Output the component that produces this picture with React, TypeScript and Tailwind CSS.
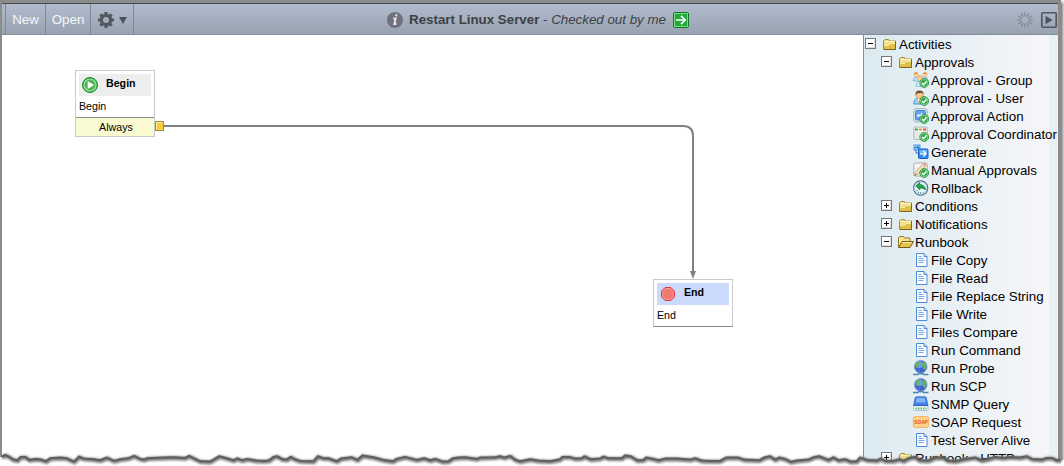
import React from 'react';

type IconKind =
  | 'folder' | 'open' | 'group' | 'user' | 'action' | 'coordinator' | 'generate'
  | 'manual' | 'rollback' | 'doc' | 'globe' | 'snmp' | 'soap';

interface Row {
  level: 0 | 1 | 2;
  label: string;
  icon: IconKind;
  toggle?: 'plus' | 'minus';
}

const rows: Row[] = [
  { level: 0, label: 'Activities', icon: 'folder', toggle: 'minus' },
  { level: 1, label: 'Approvals', icon: 'folder', toggle: 'minus' },
  { level: 2, label: 'Approval - Group', icon: 'group' },
  { level: 2, label: 'Approval - User', icon: 'user' },
  { level: 2, label: 'Approval Action', icon: 'action' },
  { level: 2, label: 'Approval Coordinator', icon: 'coordinator' },
  { level: 2, label: 'Generate', icon: 'generate' },
  { level: 2, label: 'Manual Approvals', icon: 'manual' },
  { level: 2, label: 'Rollback', icon: 'rollback' },
  { level: 1, label: 'Conditions', icon: 'folder', toggle: 'plus' },
  { level: 1, label: 'Notifications', icon: 'folder', toggle: 'plus' },
  { level: 1, label: 'Runbook', icon: 'open', toggle: 'minus' },
  { level: 2, label: 'File Copy', icon: 'doc' },
  { level: 2, label: 'File Read', icon: 'doc' },
  { level: 2, label: 'File Replace String', icon: 'doc' },
  { level: 2, label: 'File Write', icon: 'doc' },
  { level: 2, label: 'Files Compare', icon: 'doc' },
  { level: 2, label: 'Run Command', icon: 'doc' },
  { level: 2, label: 'Run Probe', icon: 'globe' },
  { level: 2, label: 'Run SCP', icon: 'globe' },
  { level: 2, label: 'SNMP Query', icon: 'snmp' },
  { level: 2, label: 'SOAP Request', icon: 'soap' },
  { level: 2, label: 'Test Server Alive', icon: 'doc' },
  { level: 1, label: 'Runbook - HTTP', icon: 'folder', toggle: 'plus' },
];

const indent = { 0: 'pl-[1px]', 1: 'pl-[17px]', 2: 'pl-[49px]' };

function Check() {
  return (
    <g>
      <circle cx="11.200" cy="11" r="4.400" fill="#2fa544" stroke="#16862f" strokeWidth=".8" />
      <circle cx="11.200" cy="11" r="3.700" fill="none" stroke="#a9e2ad" strokeWidth=".7" />
      <path d="M9 11l1.700 1.800 2.800-3.600" fill="none" stroke="#fff" strokeWidth="1.400" />
    </g>
  );
}

function Person({ x, y, hair, shirt }: { x: number; y: number; hair: string; shirt: string }) {
  return (
    <g transform={`translate(${x} ${y})`}>
      <path d="M0 9q0-4 3-4t3 4z" fill={shirt} stroke="#4b9bd6" strokeWidth=".5" />
      <circle cx="3" cy="2.800" r="2.100" fill="#fbd7a8" stroke="#d79b5c" strokeWidth=".5" />
      <path d="M.8 2.600Q1 .2 3 .2t2.200 2.400Q3 1 .8 2.600" fill={hair} />
    </g>
  );
}

function TreeIcon({ kind }: { kind: IconKind }) {
  return (
    <svg className="h-4 w-4 shrink-0 overflow-visible" viewBox="0 0 16 16">
      {kind === 'folder' && (
        <g>
          <path d="M1.500 13.500V5l1.500-1.500h3.500l1 1.500h6v8.500z" fill="#f3e08a" stroke="#a8893a" />
          <path d="M2.500 5.500h10.500" stroke="#fff5b4" />
          <path d="M2 13V9.500h4.500l2-2h5V13z" fill="#dfc04a" />
          <path d="M2.500 9.500h4l2-2h4.500" stroke="#fbf0b0" fill="none" strokeWidth=".8" />
          <path d="M13.500 5v8.500H2" stroke="#7d6220" fill="none" />
        </g>
      )}
      {kind === 'open' && (
        <g>
          <path d="M0.500 13V4l1-1.500h4l1 1.500h5.500v3.500" fill="#f6e497" stroke="#9a7826" />
          <path d="M0.500 13.500L4 7.500h11.500L12 13.500z" fill="#e4c54b" stroke="#765a18" />
          <path d="M4.500 8.500h9" stroke="#fff2a4" />
        </g>
      )}
      {kind === 'group' && (
        <g>
          <Person x={0} y={0} hair="#d78b40" shirt="#bfe0f7" />
          <Person x={9} y={0} hair="#d78b40" shirt="#bfe0f7" />
          <g transform="translate(.6 3) scale(1.250)"><Person x={2} y={0} hair="#edb56b" shirt="#d8f0ff" /></g>
          <Check />
        </g>
      )}
      {kind === 'user' && (
        <g>
          <path d="M.8 14q0-6 5-6t5 6z" fill="#9fd3f8" stroke="#4295cd" />
          <path d="M4 8.500l2 4.500 2-4.500" fill="#fff" stroke="#f5a64c" strokeWidth=".8" />
          <circle cx="6.500" cy="5" r="3.600" fill="#fbc98c" stroke="#c58745" strokeWidth=".6" />
          <path d="M2.700 5.500Q1.700 .4 6.500.4t3.900 4.600L9.500 3 4.300 3.300z" fill="#6b5136" />
          <Check />
        </g>
      )}
      {kind === 'action' && (
        <g>
          <rect x=".8" y=".8" width="13.400" height="13" rx="1.800" fill="#f4f6f7" stroke="#9aa8b5" />
          <rect x="2.500" y="2.500" width="10" height="9.500" rx="1" fill="#65a4e9" stroke="#4588d6" />
          <path d="M4 6.500h4V4.500l3 3-3 3v-2H4z" fill="#e9f6ff" />
          <Check />
        </g>
      )}
      {kind === 'coordinator' && (
        <g>
          <rect x=".8" y="1" width="13.400" height="12.500" rx="1" fill="#e4e7e6" stroke="#b4bab9" />
          <path d="M2 2h11v3.500H2z" fill="#fff" />
          <path d="M2 3.500h3" stroke="#3ba33d" strokeWidth="2" />
          <path d="M6 3.500h3" stroke="#d89a20" strokeWidth="2" />
          <path d="M10 3.500h3" stroke="#d84b30" strokeWidth="2" />
          <Check />
        </g>
      )}
      {kind === 'generate' && (
        <g>
          <rect x="1" y="1" width="6" height="5" fill="#91c9fa" stroke="#4e9ae8" />
          <path d="M2 3.500h4M4.500 2l1.500 1.500L4.500 5M3 6v3h3" fill="none" stroke="#2477d4" />
          <rect x="5.500" y="5" width="9.500" height="9.500" rx="1" fill="#318ae8" stroke="#1762c2" />
          <path d="M6.500 6h7.500v3H6.500z" fill="#6bb4f5" />
          <path d="M7 9.800h6M10.300 7l2.800 2.800-2.800 2.800" fill="none" stroke="#fff" strokeWidth="1.300" />
        </g>
      )}
      {kind === 'manual' && (
        <g>
          <rect x=".8" y="1" width="13.400" height="13" rx="1.500" fill="#f5f5f5" stroke="#aaa" />
          <path d="M1.500 13.500l1-3.500L10 2l2.500 2.300L5 12z" fill="#f9e3b8" stroke="#c2955d" strokeWidth=".8" />
          <path d="M9.500 2.500l1.500-2 2.500 2-1 2z" fill="#f3a18b" />
          <path d="M1.500 13.500l.6-1.800 1.200 1.200z" fill="#555" />
          <Check />
        </g>
      )}
      {kind === 'rollback' && (
        <g>
          <circle cx="7.700" cy="8" r="7.100" fill="#eef8fb" stroke="#416f8e" strokeWidth="1.100" />
          <circle cx="7.700" cy="8" r="5.900" fill="none" stroke="#b4d4e1" strokeWidth=".8" />
          <path d="M2.800 6l4-3.500v2q5.200.2 5.700 5.500-2-2.300-5.700-2v2z" fill="#27a545" stroke="#087536" strokeWidth=".7" />
          <path d="M3.500 11l1.300-.7M5.300 13l.5-1.200M7.700 13.500V12M10.500 12.800l-.6-1" stroke="#47748f" strokeWidth=".9" />
        </g>
      )}
      {kind === 'doc' && (
        <g>
          <path d="M3.500 1.500h7.500l3 3v10h-10.500z" fill="#fbfdff" stroke="#4b8bdc" />
          <path d="M11 1.500v3h3" fill="#cce2ff" stroke="#4b8bdc" />
          <path d="M5.500 4.500h3M5.500 6.500h5M5.500 8.500h6M5.500 10.500h5" stroke="#78a7e8" />
        </g>
      )}
      {kind === 'globe' && (
        <g>
          <circle cx="7.700" cy="6.700" r="6.300" fill="#4361d6" stroke="#7b93c9" strokeWidth=".8" />
          <circle cx="6.500" cy="4.500" r="3.500" fill="#9fb9f6" opacity=".6" />
          <path d="M2.500 4L5 1.700l2.500.5-.5 2-2 1 .5 1.500-1.500 1.500L2.300 6.500zM9.500 3l2-1 1.800 2.500-.3 4-1.800 1.700-1.400-2.500L9 5.800zM5.500 9.500l1.800.5-.5 2z" fill="#5cb955" />
          <path d="M0 14.500h5l1-1h3.500l1 1h5M7.700 13v1.500" fill="none" stroke="#4a87b5" strokeWidth="1.400" />
        </g>
      )}
      {kind === 'snmp' && (
        <g>
          <path d="M3.500 .8h8.500q1 0 1.300 1L15 9.500H.5L2.200 1.800q.3-1 1.300-1z" fill="#4481e4" stroke="#3471d2" strokeWidth=".8" />
          <path d="M3.800 2h7.900l1 4.500H2.800z" fill="#83b4f6" />
          <rect x=".5" y="9.500" width="14.500" height="5" rx=".8" fill="#eef5fa" stroke="#9fb0c9" strokeWidth=".7" />
          <path d="M0.500 9.500H15" stroke="#285fbf" />
          <path d="M2.500 12.500h11" stroke="#5eb45c" strokeWidth="1.800" strokeDasharray="1.500 1" />
        </g>
      )}
      {kind === 'soap' && (
        <g>
          <rect x=".3" y="2.500" width="15.200" height="11" rx="2" fill="#ffd18b" stroke="#f6a94a" strokeWidth=".8" />
          <text x="1.300" y="10.200" fontSize="5.800" fontWeight="700" fill="#e4501e" textLength="13.400" lengthAdjust="spacingAndGlyphs" fontFamily="Liberation Sans, sans-serif">SOAP</text>
        </g>
      )}
    </svg>
  );
}

function Toggle({ kind }: { kind: 'plus' | 'minus' }) {
  return (
    <svg className="mb-px mr-[6px] h-[11px] w-[11px] shrink-0" viewBox="0 0 11 11" shapeRendering="crispEdges">
      <rect x=".5" y=".5" width="10" height="10" fill="#fff" stroke="#777" />
      <path d="M2 9.500h8M9.500 2v8" stroke="#ddd" />
      <path d={kind === 'plus' ? 'M3 5.500h5M5.500 3v5' : 'M3 5.500h5'} stroke="#000" />
    </svg>
  );
}

const tearWest: [number, number][] = [[5,64],[15,58],[25,62],[40,72],[52,74],[62,64],[75,64],[88,73],[105,70],[120,71],[138,77],[150,68],[180,66],[200,68],[222,78],[237,63],[250,69],[280,71],[300,74],[320,66],[342,76],[360,71],[385,68],[402,61],[420,70],[432,72],[442,68],[490,66],[520,65],[555,67],[567,61],[600,77],[630,78],[657,62],[680,68],[700,74],[712,68],[725,74],[742,70],[770,75],[795,76],[808,74],[820,64],[832,62],[845,70],[860,72],[872,64],[885,71],[900,76]];
const tearMiddle: [number, number][] = [[40,77],[53,62],[70,68],[85,68],[110,77],[122,69],[155,65],[172,73],[187,60],[220,65],[250,73],[278,77],[290,70],[315,64],[350,73],[372,68],[390,74],[405,70],[428,78],[445,77],[458,68],[475,66],[495,65],[530,70],[540,66],[585,65],[600,62],[612,66],[630,61],[645,72],[660,77],[690,71],[715,75],[750,77],[780,71],[787,64],[808,64],[825,69],[845,68],[853,62],[872,71],[900,69]];
const tearEast: [number, number][] = [[10,63],[25,68],[65,68],[75,60],[92,62],[112,74],[130,73],[138,66],[160,70],[175,74],[195,69],[232,69],[270,72],[285,68],[305,75],[330,76],[360,76],[378,66],[415,66],[432,72],[478,74],[492,66],[510,62],[525,72],[537,66],[555,70],[572,79],[590,75],[625,72],[640,65],[657,62],[685,73],[700,65],[715,74],[735,71],[752,78],[770,77]];
const tearSidebar: [number, number][] = [[0,66],[20,73],[50,75],[62,69],[75,76],[100,76],[118,71],[130,76],[148,67],[165,64],[178,74],[205,75],[225,66],[250,66],[262,75],[285,77],[308,72],[345,66],[365,74],[385,70],[405,64],[430,67],[450,64],[480,66],[500,62],[515,70],[545,72],[560,67],[575,67],[590,74],[602,74]];

const scale = (pts: [number, number][], dx: number) =>
  pts.map(([x, y]) => `${(x / 3 + dx).toFixed(1)} ${(y / 3 + 5.6).toFixed(1)}`);
const tear = [...scale(tearWest, 0), ...scale(tearMiddle, 300), ...scale(tearEast, 600), ...scale(tearSidebar, 860)].join(' L');

function TornEdge() {
  return (
    <svg className="pointer-events-none absolute bottom-0 left-0 h-9 w-[1064px]" viewBox="0 0 1064 36">
      <defs>
        <filter id="soft" x="-5%" y="-50%" width="110%" height="200%"><feGaussianBlur stdDeviation="0.9" /></filter>
      </defs>
      <path d={`M0 27 L${tear} L1064 30 V36 H0Z`} fill="#fff" />
      <path d={`M${tear}`} transform="translate(.6 .8)" fill="none" stroke="#777" strokeWidth="4" filter="url(#soft)" />
      <path d={`M${tear}`} fill="none" stroke="#5f5f5b" strokeWidth="2" strokeLinejoin="round" />
    </svg>
  );
}

function Toolbar() {
  return (
    <header className="flex h-[31px] shrink-0 items-stretch border-b border-[#858d9c] bg-gradient-to-b from-[#b0bccd] to-[#98a2b1] pl-[3px] text-[13.333px]">
      <button className="w-[40px] border-l border-[#7f8795] pt-px text-center text-[#f4f6f8]">New</button>
      <button className="w-[45px] border-l border-[#7f8795] pt-px text-center text-[#f4f6f8]">Open</button>
      <button className="flex w-[44px] items-center border-x border-[#7f8795] pl-[7px]">
        <svg className="mt-px h-4 w-4" viewBox="0 0 16 16">
          <circle cx="8" cy="8" r="4.600" fill="none" stroke="#53575f" strokeWidth="3.200" />
          <g stroke="#53575f" strokeWidth="3.200">
            <path d="M8 0v3M8 13v3M0 8h3M13 8h3M2.400 2.400l2 2M11.600 11.600l2 2M13.600 2.400l-2 2M4.400 11.600l-2 2" />
          </g>
        </svg>
        <svg className="ml-[5px] mt-[3px] h-[7px] w-2" viewBox="0 0 8 7"><path d="M0 0h8L4 7z" fill="#4d5159" /></svg>
      </button>
      <div className="ml-[253px] flex items-center pt-px text-[#3e4145]">
        <svg className="mr-[6px] h-4 w-4" viewBox="0 0 16 16">
          <circle cx="8" cy="8" r="8" fill="#70717c" />
          <path d="M9.500 2.300l-.4 2M6.300 6.500h2.300L7.400 12h2" fill="none" stroke="#e8eaee" strokeWidth="1.900" />
        </svg>
        <span className="w-[130px] whitespace-nowrap pt-px font-bold">Restart Linux Server</span>
        <span className="ml-[4px] w-[123px] whitespace-nowrap">- <i>Checked out by me</i></span>
        <svg className="ml-[7px] h-4 w-4" viewBox="0 0 16 16">
          <rect x=".5" y=".5" width="15" height="15" rx="1.500" fill="#22a93c" stroke="#11752a" />
          <rect x="1.500" y="1.500" width="13" height="13" fill="none" stroke="#78df7d" />
          <path d="M3 8h9M8 3.800l4.200 4.200L8 12.200" fill="none" stroke="#fff" strokeWidth="1.700" />
        </svg>
      </div>
      <div className="ml-auto flex items-center gap-2 pr-[1px] pt-px">
        <svg className="h-4 w-4" viewBox="0 0 16 16">
          {Array.from({ length: 12 }, (_, i) => (
            <path key={i} d="M8 .3v4.200" transform={`rotate(${i * 30} 8 8)`} stroke="#858d99" strokeWidth="1.500" />
          ))}
        </svg>
        <svg className="h-4 w-4" viewBox="0 0 16 16">
          <rect x=".8" y=".8" width="14.400" height="14.400" rx="1" fill="none" stroke="#50545d" strokeWidth="1.600" />
          <path d="M4.500 3.800v8.400l7-4.200z" fill="#50545d" />
        </svg>
      </div>
    </header>
  );
}

export default function App() {
  return (
    <div className="relative h-[466px] w-[1064px] overflow-hidden bg-white font-['Liberation_Sans',Arial,sans-serif] text-black">
      <div className="flex h-[461px] w-[1061px] flex-col border-l-2 border-r-[3px] border-t-[3px] border-[#8b8b8b] bg-white shadow-[2px_2px_3px_#777]">
        <div className="h-px shrink-0 bg-[#4b4b4b]" />
        <Toolbar />
        <div className="flex min-h-0 flex-1">
          <main className="relative flex-1 overflow-hidden bg-white text-[10.667px]">
            <svg className="absolute left-0 top-0 h-[260px] w-[740px]" viewBox="0 0 740 260">
              <path d="M161 91H681Q691 91 691 101V238" fill="none" stroke="#808080" strokeWidth="2" />
              <path d="M688 236h6l-3 8z" fill="#808080" />
            </svg>
            <section className="absolute left-[73px] top-[35px] h-[67px] w-[80px] border border-[#cacaca] bg-white">
              <div className="mx-[3px] mt-[3px] flex h-[22px] items-center bg-[#eee] pl-[3px]">
                <svg className="h-4 w-4" viewBox="0 0 16 16">
                  <circle cx="8" cy="8" r="7.500" fill="#28a73e" stroke="#15912d" />
                  <circle cx="8" cy="8" r="6" fill="#49b655" stroke="#a7e1a7" strokeWidth="1.200" />
                  <path d="M5.700 4v8l6.300-4z" fill="#fff" />
                </svg>
                <b className="ml-[8px] pb-[5px]">Begin</b>
              </div>
              <div className="h-[20px] pl-[3px] leading-[20px]">Begin</div>
              <div className="mt-px h-[19px] border-t border-[#8e8e8e] bg-[#fafad2] pl-[2px] text-center leading-[19px]">Always</div>
            </section>
            <svg className="absolute left-[153px] top-[86px] h-[10px] w-[9px]" viewBox="0 0 9 10">
              <rect x=".5" y=".5" width="8" height="9" fill="#f6ce39" stroke="#a28b50" />
              <path d="M1.500 8V1.500h6" fill="none" stroke="#ffe992" />
            </svg>
            <section className="absolute left-[651px] top-[244px] h-[48px] w-[80px] border border-b-[#888] border-l-[#cacaca] border-r-[#cacaca] border-t-[#cacaca] bg-white">
              <div className="mx-[3px] mt-[3px] flex h-[22px] items-center bg-[#cbdafa] pl-[3px]">
                <svg className="h-4 w-4" viewBox="0 0 16 16">
                  <path d="M5.200 1.500h5.600l3.700 3.700v5.600l-3.700 3.700H5.200l-3.700-3.700V5.200z" fill="#f1786f" stroke="#df3148" />
                  <path d="M5.600 2.600h4.800l3 3v4.800l-3 3H5.600l-3-3V5.600z" fill="none" stroke="#f9aaa3" strokeWidth=".8" />
                </svg>
                <b className="ml-[8px] pb-[5px]">End</b>
              </div>
              <div className="h-[20px] pl-[3px] leading-[20px]">End</div>
            </section>
          </main>
          <aside className="flex w-[195px] shrink-0 overflow-hidden border-l border-[#858d9c] bg-[#e8f1f4]">
            <div className="h-full w-[185px] shrink-0 bg-gradient-to-r from-[#dcebf1] to-[#f6f6f9]">
              {rows.map((row) => (
                <div key={row.label} className={`flex h-[18px] items-center whitespace-nowrap text-[13.333px] leading-[18px] ${indent[row.level]}`}>
                  {row.toggle && <Toggle kind={row.toggle} />}
                  <TreeIcon kind={row.icon} />
                  <span className={row.level === 2 ? 'ml-[2px] pt-[2px]' : 'ml-px pt-[2px]'}>{row.label}</span>
                </div>
              ))}
            </div>
          </aside>
        </div>
      </div>
      <TornEdge />
    </div>
  );
}
